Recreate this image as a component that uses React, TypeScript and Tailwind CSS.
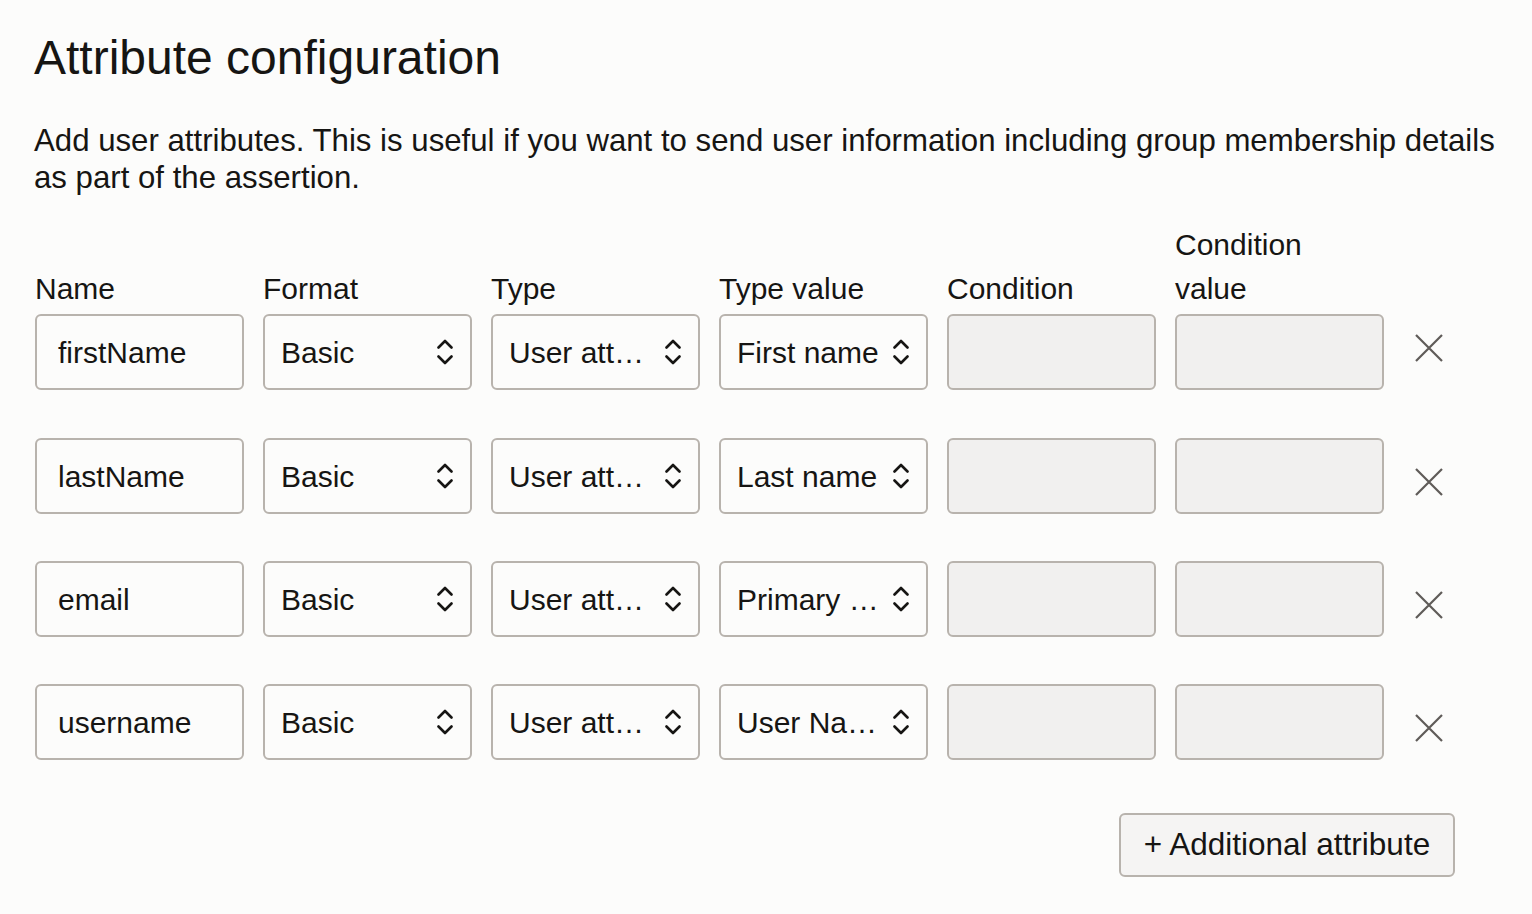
const labels = ["Name", "Format", "Type", "Type value", "Condition", "Condition value"];

type Row = { name: string; format: string; type: string; typeValue: string };

const rows: Row[] = [
  { name: "firstName", format: "Basic", type: "User att…", typeValue: "First name" },
  { name: "lastName", format: "Basic", type: "User att…", typeValue: "Last name" },
  { name: "email", format: "Basic", type: "User att…", typeValue: "Primary …" },
  { name: "username", format: "Basic", type: "User att…", typeValue: "User Na…" },
];

function UpDown() {
  return (
    <svg width="16" height="26" viewBox="0 0 16 26" fill="none" className="shrink-0">
      <path d="M1.5 8.5 L8 2 L14.5 8.5" stroke="#161513" strokeWidth="2.6" strokeLinecap="round" strokeLinejoin="round" />
      <path d="M1.5 17.5 L8 24 L14.5 17.5" stroke="#161513" strokeWidth="2.6" strokeLinecap="round" strokeLinejoin="round" />
    </svg>
  );
}

function TextBox({ value }: { value: string }) {
  return (
    <div className="flex h-[76px] items-center rounded-[6px] border-2 border-[#b8b3ad] bg-[#fcfcfb] pl-[21px] text-[30px]">
      {value}
    </div>
  );
}

function SelectBox({ value }: { value: string }) {
  return (
    <div className="flex h-[76px] items-center justify-between rounded-[6px] border-2 border-[#b8b3ad] bg-[#fcfcfb] pl-[16px] pr-[17px] text-[30px]">
      <span className="whitespace-nowrap">{value}</span>
      <UpDown />
    </div>
  );
}

function DisabledBox() {
  return <div className="h-[76px] rounded-[6px] border-2 border-[#b8b3ad] bg-[#f1f0ef]" />;
}

function RemoveButton({ first }: { first: boolean }) {
  return (
    <div className={first ? "flex justify-center pt-[20px]" : "flex justify-center pt-[30px]"}>
      <svg width="28" height="28" viewBox="0 0 28 28" fill="none">
        <path d="M1 1 L27 27 M27 1 L1 27" stroke="#5f5b58" strokeWidth="2.2" />
      </svg>
    </div>
  );
}

export default function App() {
  return (
    <div className="min-h-screen bg-[#fcfcfb] pl-[34px] pt-[30px] text-[#161513] font-['Liberation_Sans',Arial,sans-serif]">
      <h1 className="text-[48px] font-normal leading-[56px]">Attribute configuration</h1>
      <p className="mt-[36px] w-[1492px] text-[31.2px] leading-[37px]">
        Add user attributes. This is useful if you want to send user information including group membership details
        as part of the assertion.
      </p>

      <div className="ml-[1px] mt-[27px] w-[1420px]">
        <div className="grid grid-cols-[repeat(6,209px)_52px] items-end gap-x-[19px] text-[30px] leading-[44px]">
          {labels.map((label) => (
            <div key={label} className={label === "Condition value" ? "w-[150px]" : ""}>
              {label}
            </div>
          ))}
          <div />
        </div>

        <div className="mt-[3px] flex flex-col">
          {rows.map((row, i) => (
            <div
              key={row.name}
              className={
                i === 0
                  ? "grid grid-cols-[repeat(6,209px)_52px] gap-x-[19px]"
                  : i === 1
                    ? "mt-[48px] grid grid-cols-[repeat(6,209px)_52px] gap-x-[19px]"
                    : "mt-[47px] grid grid-cols-[repeat(6,209px)_52px] gap-x-[19px]"
              }
            >
              <TextBox value={row.name} />
              <SelectBox value={row.format} />
              <SelectBox value={row.type} />
              <SelectBox value={row.typeValue} />
              <DisabledBox />
              <DisabledBox />
              <RemoveButton first={i === 0} />
            </div>
          ))}
        </div>

        <div className="mt-[53px] flex justify-end">
          <button className="flex h-[64px] w-[336px] items-center justify-center rounded-[6px] border-2 border-[#b8b3ad] bg-[#f5f4f3] text-[31.5px]">
            + Additional attribute
          </button>
        </div>
      </div>
    </div>
  );
}
